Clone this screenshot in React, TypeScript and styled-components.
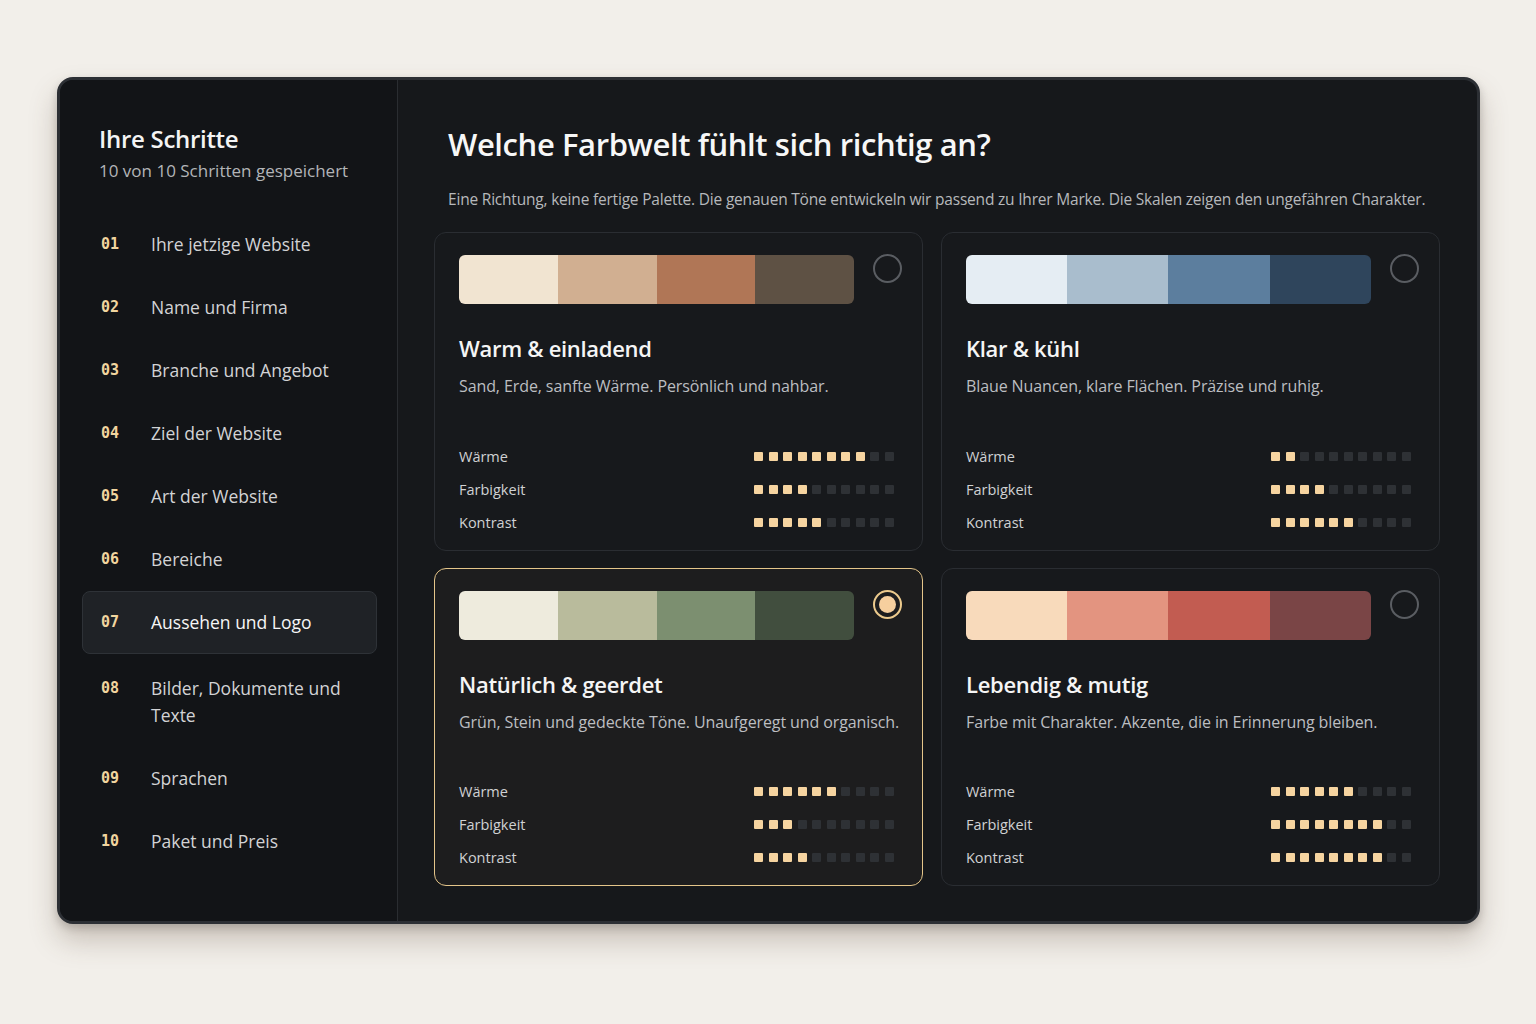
import React from "react"
import styled, { createGlobalStyle, css } from "styled-components"

const GlobalStyle = createGlobalStyle`
    html, body {
        margin: 0;
        padding: 0;
        background: #f2efea;
        font-family: "Open Sans", "Noto Sans", sans-serif;
    }
    * { box-sizing: border-box; }
`

type Level = { label: string, value: number }

type Palette = {
    title: string
    text: string
    colors: string[]
    levels: Level[]
}

const steps = [
    "Ihre jetzige Website",
    "Name und Firma",
    "Branche und Angebot",
    "Ziel der Website",
    "Art der Website",
    "Bereiche",
    "Aussehen und Logo",
    "Bilder, Dokumente und Texte",
    "Sprachen",
    "Paket und Preis",
]

const palettes: Palette[] = [
    {
        title: "Warm & einladend",
        text: "Sand, Erde, sanfte Wärme. Persönlich und nahbar.",
        colors: ["#f1e4d1", "#d1af91", "#b07656", "#5e5144"],
        levels: [{ label: "Wärme", value: 8 }, { label: "Farbigkeit", value: 4 }, { label: "Kontrast", value: 5 }],
    },
    {
        title: "Klar & kühl",
        text: "Blaue Nuancen, klare Flächen. Präzise und ruhig.",
        colors: ["#e5edf3", "#a9bdcd", "#5c7e9e", "#2f455c"],
        levels: [{ label: "Wärme", value: 2 }, { label: "Farbigkeit", value: 4 }, { label: "Kontrast", value: 6 }],
    },
    {
        title: "Natürlich & geerdet",
        text: "Grün, Stein und gedeckte Töne. Unaufgeregt und organisch.",
        colors: ["#eeebdd", "#b9bb9c", "#7c8f70", "#414e3e"],
        levels: [{ label: "Wärme", value: 6 }, { label: "Farbigkeit", value: 3 }, { label: "Kontrast", value: 4 }],
    },
    {
        title: "Lebendig & mutig",
        text: "Farbe mit Charakter. Akzente, die in Erinnerung bleiben.",
        colors: ["#f8dabb", "#e39480", "#c25c51", "#7a4546"],
        levels: [{ label: "Wärme", value: 6 }, { label: "Farbigkeit", value: 8 }, { label: "Kontrast", value: 8 }],
    },
]

const ACTIVE_STEP = 6
const SELECTED = 2

const Scale: React.FC<{ level: Level }> = ({ level }) => (
    <ScaleRow>
        <ScaleLabel>{level.label}</ScaleLabel>
        <Dots>
            {Array.from({ length: 10 }, (_, i) => <Dot key={i} $on={i < level.value} />)}
        </Dots>
    </ScaleRow>
)

const PaletteCard: React.FC<{ palette: Palette, selected: boolean }> = ({ palette, selected }) => (
    <Card $selected={selected}>
        <CardTop>
            <Swatches>
                {palette.colors.map((c) => <Swatch key={c} style={{ background: c }} />)}
            </Swatches>
            <Radio $selected={selected} />
        </CardTop>
        <CardTitle>{palette.title}</CardTitle>
        <CardText>{palette.text}</CardText>
        <Scales>
            {palette.levels.map((l) => <Scale key={l.label} level={l} />)}
        </Scales>
    </Card>
)

export default function App() {
    return <>
        <GlobalStyle />
        <Page>
            <Frame>
                <Sidebar>
                    <SideHeader>
                        <SideTitle>Ihre Schritte</SideTitle>
                        <SideSub>10 von 10 Schritten gespeichert</SideSub>
                    </SideHeader>
                    <StepList>
                        {steps.map((s, i) => (
                            <Step key={s} $active={i === ACTIVE_STEP}>
                                <StepNum>{String(i + 1).padStart(2, "0")}</StepNum>
                                <StepLabel $active={i === ACTIVE_STEP}>{s}</StepLabel>
                            </Step>
                        ))}
                    </StepList>
                </Sidebar>

                <Main>
                    <Heading>
                        <Title>Welche Farbwelt fühlt sich richtig an?</Title>
                        <Lead>Eine Richtung, keine fertige Palette. Die genauen Töne entwickeln wir passend zu Ihrer Marke. Die Skalen zeigen den ungefähren Charakter.</Lead>
                    </Heading>
                    <CardGrid>
                        {palettes.map((p, i) => <PaletteCard key={p.title} palette={p} selected={i === SELECTED} />)}
                    </CardGrid>
                </Main>
            </Frame>
        </Page>
    </>
}


const Page = styled.div`
    width: 1536px;
    height: 1024px;
    padding: 77px 57px 0 57px;
`

const Frame = styled.div`
    width: 1423px;
    height: 847px;
    display: grid;
    grid-template-columns: 338px 1fr;
    background: #16181b;
    border: 3px solid #2c2f34;
    border-radius: 16px;
    overflow: hidden;
    box-shadow: 0 16px 28px rgba(90, 70, 50, 0.28), 0 4px 8px rgba(0, 0, 0, 0.18);
`

const Sidebar = styled.div`
    background: #121417;
    border-right: 1px solid #2a2d31;
    padding: 43px 20px 0 22px;
    display: flex;
    flex-direction: column;
`

const SideHeader = styled.div`
    padding-left: 17px;
    margin-bottom: 29px;
`

const SideTitle = styled.div`
    font-size: 24px;
    font-weight: 600;
    color: #f4f4f4;
    line-height: 32px;
    letter-spacing: -0.3px;
`

const SideSub = styled.div`
    margin-top: 3px;
    font-size: 17px;
    color: #b3b5b8;
    line-height: 26px;
`

const StepList = styled.div`
    display: flex;
    flex-direction: column;
`

const Step = styled.div<{ $active: boolean }>`
    display: flex;
    align-items: flex-start;
    padding: 17px 16px 17px 18px;
    border-radius: 8px;
    border: 1px solid transparent;
    ${(p) => p.$active && css`
        margin-bottom: 3px;
        background: #1f2226;
        border-color: #2e3237;
    `}
`

const StepNum = styled.div`
    width: 50px;
    flex-shrink: 0;
    font-family: "DejaVu Sans Mono", "Liberation Mono", monospace;
    font-weight: 700;
    font-size: 15px;
    line-height: 27px;
    color: #f1d59f;
`

const StepLabel = styled.div<{ $active: boolean }>`
    font-size: 17.5px;
    line-height: 27px;
    color: ${(p) => p.$active ? "#f6f6f6" : "#d2d3d5"};
`

const Main = styled.div`
    padding: 40px 37px 35px 36px;
    display: flex;
    flex-direction: column;
`

const Heading = styled.div`
    padding: 0 14px;
    margin-bottom: 22px;
`

const Title = styled.h1`
    margin: 0;
    font-size: 31px;
    font-weight: 600;
    line-height: 48px;
    color: #f7f7f7;
    letter-spacing: -0.4px;
`

const Lead = styled.p`
    margin: 20px 0 0;
    font-size: 15.5px;
    line-height: 22px;
    color: #b6b8bb;
    letter-spacing: -0.2px;
`

const CardGrid = styled.div`
    flex: 1;
    display: grid;
    grid-template-columns: 488fr 498fr;
    grid-template-rows: 1fr 1fr;
    column-gap: 18px;
    row-gap: 17px;
`

const Card = styled.div<{ $selected: boolean }>`
    display: flex;
    flex-direction: column;
    padding: 22px 20px 11px 24px;
    border-radius: 12px;
    border: 1.5px solid #2a2d32;
    background: #17191c;
    ${(p) => p.$selected && css`
        border-color: #e4c58a;
        background: #1d1d1e;
    `}
`

const CardTop = styled.div`
    display: flex;
    align-items: flex-start;
    gap: 19px;
`

const Swatches = styled.div`
    flex: 1;
    height: 49px;
    display: flex;
    border-radius: 6px;
    overflow: hidden;
`

const Swatch = styled.div`
    flex: 1;
`

const Radio = styled.div<{ $selected: boolean }>`
    width: 29px;
    height: 29px;
    margin-top: -1px;
    border-radius: 50%;
    border: 2px solid ${(p) => p.$selected ? "#ecca8d" : "#5a5d62"};
    display: flex;
    align-items: center;
    justify-content: center;
    &::after {
        content: "";
        width: 17px;
        height: 17px;
        border-radius: 50%;
        background: #f6cf9e;
        display: ${(p) => p.$selected ? "block" : "none"};
    }
`

const CardTitle = styled.div`
    margin-top: 29px;
    font-size: 22px;
    font-weight: 600;
    line-height: 30px;
    color: #f5f5f5;
    letter-spacing: -0.3px;
`

const CardText = styled.div`
    margin-top: 12px;
    font-size: 16px;
    line-height: 22px;
    color: #bcbec1;
    letter-spacing: -0.1px;
`

const Scales = styled.div`
    margin-top: auto;
    padding-right: 8px;
    display: flex;
    flex-direction: column;
`

const ScaleRow = styled.div`
    height: 33px;
    display: flex;
    align-items: center;
    justify-content: space-between;
`

const ScaleLabel = styled.div`
    font-size: 14.5px;
    color: #d0d1d3;
`

const Dots = styled.div`
    display: flex;
    gap: 5.5px;
`

const Dot = styled.div<{ $on: boolean }>`
    width: 9px;
    height: 9px;
    border-radius: 1px;
    background: ${(p) => p.$on ? "#f6d4a0" : "#2e3135"};
`
